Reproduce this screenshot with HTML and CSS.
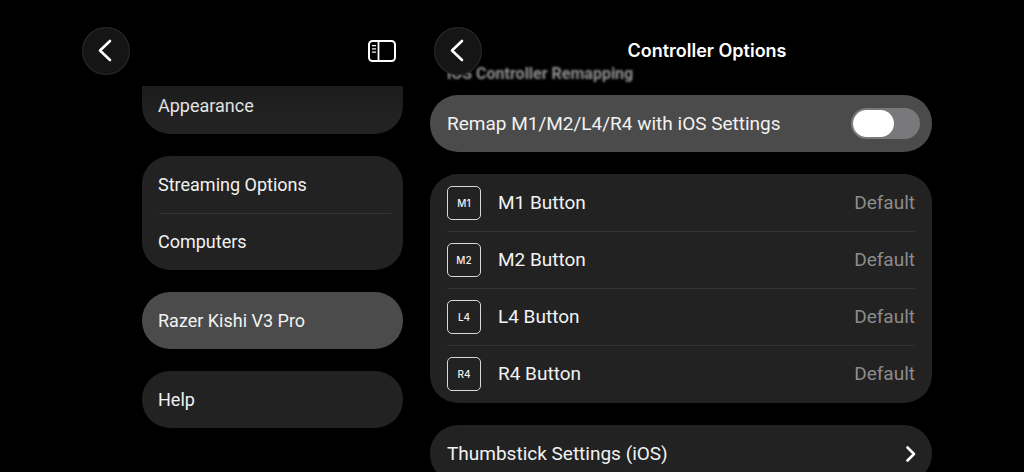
FILE: index.html
```html
<!DOCTYPE html>
<html lang="en">
<head>
<meta charset="utf-8">
<meta name="viewport" content="width=device-width, initial-scale=1">
<title>Controller Options</title>
<link rel="stylesheet" href="styles.css">
</head>
<body>
<div class="app">
  <aside class="pane sidebar">
    <header class="bar sidebar-bar">
      <button class="back" type="button" aria-label="Back">
        <svg width="48" height="48" viewBox="0 0 48 48" aria-hidden="true"><path d="M28 14 18 23.500l10 9.500"/></svg>
      </button>
      <button class="toggle-pane" type="button" aria-label="Toggle sidebar">
        <svg width="28" height="22" viewBox="0 0 28 22" aria-hidden="true">
          <rect x="1" y="1" width="26" height="20" rx="3.500" stroke-width="2"/>
          <path d="M10.500 1v20" stroke-width="1.800"/>
          <path d="M4.500 5.700h3M4.500 8.900h3M4.500 12.200h3" stroke-width="1.300"/>
        </svg>
      </button>
    </header>
    <nav class="stack sidebar-stack" aria-label="Settings">
      <div class="card card-continued"><a class="row" href="#appearance">Appearance</a></div>
      <div class="card">
        <a class="row" href="#streaming">Streaming Options</a>
        <a class="row" href="#computers">Computers</a>
      </div>
      <div class="card card-active"><a class="row" href="#kishi" aria-current="page">Razer Kishi V3 Pro</a></div>
      <div class="card"><a class="row" href="#help">Help</a></div>
    </nav>
  </aside>

  <main class="pane detail">
    <header class="bar detail-bar">
      <button class="back" type="button" aria-label="Back">
        <svg width="48" height="48" viewBox="0 0 48 48" aria-hidden="true"><path d="M28 14 18 23.500l10 9.500"/></svg>
      </button>
      <h1 class="title">Controller Options</h1>
    </header>
    <div class="detail-body">
      <h2 class="section-title">iOS Controller Remapping</h2>
      <div class="stack">
        <div class="card card-active">
          <label class="row" for="remap"><span class="name">Remap M1/M2/L4/R4 with iOS Settings</span>
            <input class="switch" id="remap" type="checkbox" role="switch"></label>
        </div>
        <div class="card mappings">
          <button class="row" type="button"><span class="key">M1</span><span class="name">M1 Button</span><span class="value">Default</span></button>
          <button class="row" type="button"><span class="key">M2</span><span class="name">M2 Button</span><span class="value">Default</span></button>
          <button class="row" type="button"><span class="key">L4</span><span class="name">L4 Button</span><span class="value">Default</span></button>
          <button class="row" type="button"><span class="key">R4</span><span class="name">R4 Button</span><span class="value">Default</span></button>
        </div>
        <div class="card">
          <a class="row" href="#thumbstick"><span class="name">Thumbstick Settings (iOS)</span>
            <svg class="chevron" width="12" height="18" viewBox="0 0 12 18" aria-hidden="true"><path d="M3.500 2.500l6.500 6.500-6.500 6.500"/></svg></a>
        </div>
      </div>
    </div>
  </main>
</div>
</body>
</html>
```
FILE: styles.css
```css
* {
  box-sizing: border-box;
}

body {
  margin: 0;
  background: #000;
  color: #f2f2f2;
  font-family: Roboto, "Liberation Sans", sans-serif;
}

.app {
  display: grid;
  grid-template-columns: minmax(0, 321fr) minmax(0, 502fr);
  column-gap: 27px;
  height: 100vh;
  padding: 0 92px 0 82px;
  overflow: hidden;
}

.pane {
  position: relative;
}

.bar {
  position: absolute;
  inset: 0 0 auto 0;
  z-index: 1;
  display: flex;
  align-items: center;
}

.sidebar-bar {
  justify-content: space-between;
  height: 86px;
  padding: 16px 7px 0 0;
  background: #000;
}

.sidebar-bar::after {
  content: "";
  position: absolute;
  inset: 100% 0 auto 0;
  height: 32px;
  background: linear-gradient(rgba(0, 0, 0, 0.2), rgba(0, 0, 0, 0));
  pointer-events: none;
}

.detail-bar {
  padding: 27px 0 0 4px;
}

.back,
.toggle-pane {
  display: grid;
  place-items: center;
  padding: 0;
  border: 0;
  background: none;
}

.back {
  flex: none;
  width: 48px;
  height: 48px;
  border-radius: 50%;
  background: #151515;
  box-shadow: inset 0 0 1px 1px #2a2a2a;
}

.back svg,
.toggle-pane svg,
.chevron {
  display: block;
  fill: none;
  stroke: #fff;
  stroke-linecap: round;
  stroke-linejoin: round;
}

.back svg {
  stroke-width: 2.6px;
}

.title {
  flex: 1;
  margin: 0;
  color: #fff;
  font: 600 18px/24px Inter, sans-serif;
  text-align: center;
}

.stack {
  display: flex;
  flex-direction: column;
  gap: 22px;
}

.sidebar-stack {
  padding: 77px 0 0 60px;
}

.card {
  flex: none;
  border-radius: 28px;
  background: #222;
}

.card-continued {
  border-top-left-radius: 0;
  border-top-right-radius: 0;
}

.card-active {
  background: #4b4b4b;
}

.row {
  position: relative;
  display: flex;
  align-items: center;
  width: 100%;
  height: 57px;
  padding: 0 17px 0 16px;
  border: 0;
  background: none;
  color: inherit;
  font: 400 18px/24px Roboto, "Liberation Sans", sans-serif;
  text-align: left;
  text-decoration: none;
  white-space: nowrap;
}

.detail .row {
  padding-left: 17px;
  font-size: 19px;
}

.row + .row::before {
  content: "";
  position: absolute;
  inset: 0 12px auto 17px;
  height: 1px;
  background: #343434;
}

.detail .row + .row::before {
  right: 17px;
}

.mappings {
  padding-bottom: 1px;
}

.detail-body {
  padding-top: 63px;
}

.section-title {
  margin: 0 0 10px;
  padding-left: 17px;
  color: #929292;
  font: 700 16px/22px Roboto, "Liberation Sans", sans-serif;
  filter: blur(1px);
}

.name {
  flex: 1;
}

.key {
  display: grid;
  place-items: center;
  width: 34px;
  height: 34px;
  margin-right: 17px;
  border: 1px solid #d8d8d8;
  border-radius: 5px;
  font: 500 10px/12px Inter, sans-serif;
}

.value {
  color: #8c8c8c;
}

.switch {
  appearance: none;
  width: 69px;
  height: 31px;
  margin: 0 -5px 0 0;
  padding: 2px;
  border-radius: 16px;
  background: #79797b;
}

.switch::before {
  content: "";
  display: block;
  width: 41px;
  height: 27px;
  border-radius: 14px;
  background: #fff;
}

.switch:checked {
  background: #34c759;
}

.switch:checked::before {
  margin-left: auto;
}

.chevron {
  margin-right: -1px;
  stroke-width: 2.6px;
}
```
